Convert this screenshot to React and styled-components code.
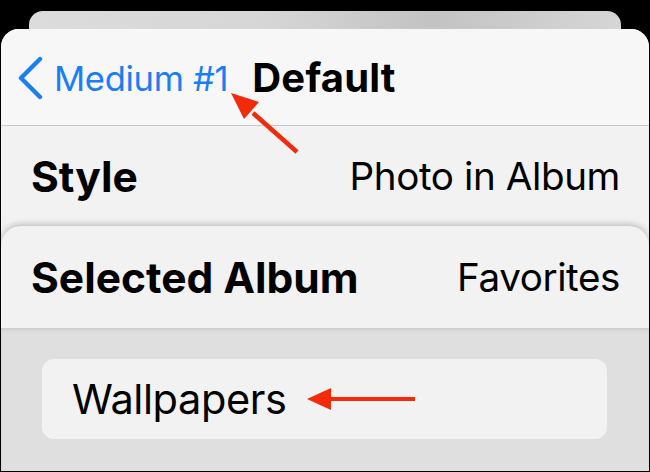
import React from "react";
import styled, { createGlobalStyle } from "styled-components";

const GlobalStyle = createGlobalStyle`
  html, body {
    margin: 0;
    padding: 0;
    background: #000;
  }
  body {
    font-family: Inter, "Liberation Sans", sans-serif;
    -webkit-font-smoothing: antialiased;
  }
`;

const Screen = styled.div`
  width: 650px;
  height: 472px;
  box-sizing: border-box;
  padding: 11px 1px 1px 1px;
  display: flex;
  flex-direction: column;
  overflow: hidden;
  background: #000;
`;

const BackCard = styled.div`
  height: 18px;
  margin: 0 28px;
  flex: none;
  border-radius: 14px 14px 0 0;
  background: linear-gradient(90deg, #dcdcdc 0%, #d6d6d6 40%, #c3c3c3 68%, #cfcfcf 88%, #d6d6d6 100%);
`;

const FrontCard = styled.div`
  position: relative;
  flex: 1;
  display: flex;
  flex-direction: column;
  border-radius: 18px 18px 0 0;
  background: #f2f2f2;
  overflow: hidden;
`;

const NavBar = styled.div`
  height: 96px;
  flex: none;
  display: flex;
  align-items: center;
  padding-left: 16px;
  background: #f7f7f7;
  border-bottom: 1px solid #c8c8c8;
`;

const BackButton = styled.div`
  display: flex;
  align-items: center;
  gap: 11px;
  color: #1a7ef7;
  font-size: 34.5px;
  font-weight: 400;
  letter-spacing: -0.3px;
  margin-top: 2px;
`;

const NavTitle = styled.div`
  margin-left: 24px;
  font-size: 40px;
  font-weight: 700;
  color: #000;
  letter-spacing: 0.2px;
`;

const Row = styled.div`
  height: ${p => p.$height}px;
  flex: none;
  display: flex;
  align-items: center;
  justify-content: space-between;
  padding: 0 29px 0 30px;
`;

const Label = styled.span`
  font-size: 42.5px;
  font-weight: 700;
  color: #000;
  letter-spacing: 0;
`;

const Value = styled.span`
  font-size: 38.6px;
  font-weight: 400;
  color: #000;
  letter-spacing: -0.4px;
`;

const Sheet = styled.div`
  flex: 1;
  display: flex;
  flex-direction: column;
  border-radius: 20px 20px 0 0;
  background: #f2f2f2;
  box-shadow: 0 -2px 6px rgba(0, 0, 0, 0.22);
  overflow: hidden;
`;

const ListArea = styled.div`
  flex: 1;
  background: #dfdfdf;
  box-shadow: inset 0 4px 5px -3px rgba(0, 0, 0, 0.12);
  padding: 31px 42px 0 41px;
`;

const ListItem = styled.div`
  height: 80px;
  display: flex;
  align-items: center;
  gap: 21px;
  padding-left: 30px;
  border-radius: 12px;
  background: #f2f2f2;
  font-size: 41.5px;
  letter-spacing: -0.4px;
  color: #000;
`;

const Callout = styled.svg`
  position: absolute;
  left: 222px;
  top: 57px;
  pointer-events: none;
`;

const Chevron = () => (
  <svg width="26" height="44" viewBox="0 0 26 44">
    <path d="M23 3 L4 22 L23 41" fill="none" stroke="#1a7ef7" strokeWidth="4.4" strokeLinecap="round" strokeLinejoin="round" />
  </svg>
);

const LeftArrow = () => (
  <svg width="110" height="24" viewBox="0 0 110 24">
    <path d="M20 10 H108 V14 H20 Z" fill="#f52a0a" />
    <path d="M0 12 L24 1 L24 23 Z" fill="#f52a0a" />
  </svg>
);

export default function App() {
  return (
    <>
      <GlobalStyle />
      <Screen>
        <BackCard />
        <FrontCard>
          <NavBar>
            <BackButton>
              <Chevron />
              Medium #1
            </BackButton>
            <NavTitle>Default</NavTitle>
          </NavBar>
          <Row $height={100}>
            <Label>Style</Label>
            <Value>Photo in Album</Value>
          </Row>
          <Sheet>
            <Row $height={102}>
              <Label>Selected Album</Label>
              <Value>Favorites</Value>
            </Row>
            <ListArea>
              <ListItem>
                Wallpapers
                <LeftArrow />
              </ListItem>
            </ListArea>
          </Sheet>
          <Callout width="90" height="80" viewBox="0 0 90 80">
            <path d="M74 66 L30 27" stroke="#f52a0a" strokeWidth="4.5" strokeLinecap="butt" />
            <path d="M8 7 L36 16 L21 33 Z" fill="#f52a0a" />
          </Callout>
        </FrontCard>
      </Screen>
    </>
  );
}
